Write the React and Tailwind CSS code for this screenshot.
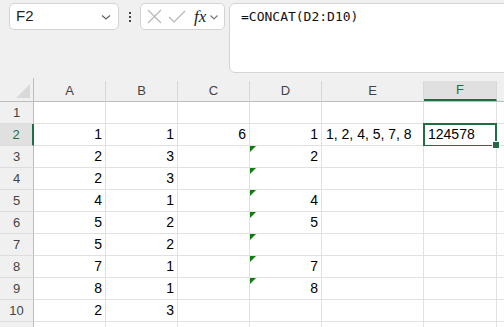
import React from "react";

const cols = [
  { key: "A", w: "w-[72px]" },
  { key: "B", w: "w-[72px]" },
  { key: "C", w: "w-[72px]" },
  { key: "D", w: "w-[72px]" },
  { key: "E", w: "w-[102px]" },
  { key: "F", w: "w-[73px]" },
];

const rows = [
  { n: 1, A: "", B: "", C: "", D: "" },
  { n: 2, A: "1", B: "1", C: "6", D: "1", E: "1, 2, 4, 5, 7, 8", F: "124578" },
  { n: 3, A: "2", B: "3", D: "2", flag: true },
  { n: 4, A: "2", B: "3", D: "", flag: true },
  { n: 5, A: "4", B: "1", D: "4", flag: true },
  { n: 6, A: "5", B: "2", D: "5", flag: true },
  { n: 7, A: "5", B: "2", D: "", flag: true },
  { n: 8, A: "7", B: "1", D: "7", flag: true },
  { n: 9, A: "8", B: "1", D: "8", flag: true },
  { n: 10, A: "2", B: "3", D: "" },
  { n: 11, hideNum: true },
];

const Toolbar = () => (
  <div className="h-[78px] bg-[#f0f0f0] flex items-start pt-[3px] pl-[9px]">
    {/* Name box */}
    <div className="w-[110px] h-[27px] shrink-0 bg-white border border-[#d4d4d4] rounded-[5px] flex items-center justify-between pl-[6px] pr-[6px]">
      <span className="text-[15px] text-[#222]">F2</span>
      <svg width="12" height="12" viewBox="0 0 12 12" className="mt-[1px]">
        <path d="M2 4.5 L6 8 L10 4.5" fill="none" stroke="#666" strokeWidth="1.3" />
      </svg>
    </div>
    {/* dots */}
    <div className="w-[21px] h-[27px] shrink-0 flex flex-col items-center justify-center gap-[2px]">
      <span className="w-[2px] h-[2px] bg-[#444]" />
      <span className="w-[2px] h-[2px] bg-[#444]" />
      <span className="w-[2px] h-[2px] bg-[#444]" />
    </div>
    {/* cancel / enter / fx */}
    <div className="w-[85px] h-[27px] shrink-0 bg-white border border-[#d4d4d4] rounded-[5px] flex items-center pl-[6px]">
      <svg width="15" height="15" viewBox="0 0 15 15">
        <path d="M1 1 L14 14 M14 1 L1 14" stroke="#b4b4b4" strokeWidth="1.1" />
      </svg>
      <svg width="18" height="15" viewBox="0 0 18 15" className="ml-[6px]">
        <path d="M1 8 L6 13 L17 2" fill="none" stroke="#b4b4b4" strokeWidth="1.1" />
      </svg>
      <span className="ml-[8px] text-[17px] italic text-[#222] leading-none" style={{ fontFamily: '"Liberation Serif", serif' }}>
        fx
      </span>
      <svg width="10" height="10" viewBox="0 0 10 10" className="ml-[3px] mt-[1px]">
        <path d="M1.5 3.5 L5 7 L8.5 3.5" fill="none" stroke="#777" strokeWidth="1.1" />
      </svg>
    </div>
    {/* formula box */}
    <div className="ml-[4px] w-[290px] h-[70px] shrink-0 bg-white border border-[#d4d4d4] rounded-[6px] pl-[11px] pt-[5px]">
      <div className="text-[13px] leading-[16px] text-[#111]" style={{ fontFamily: '"DejaVu Sans Mono", "Liberation Mono", monospace' }}>
        =CONCAT(D2:D10)
      </div>
    </div>
  </div>
);

const HeaderRow = () => (
  <div className="flex h-[24px] bg-[#f0f0f0] border-b border-[#bdbdbd]">
    <div className="w-[34px] shrink-0 border-r border-[#bdbdbd] relative">
      <div
        className="absolute right-[3px] bottom-[3px] w-[14px] h-[14px] bg-[#d9d9d9]"
        style={{ clipPath: "polygon(100% 0, 100% 100%, 0 100%)" }}
      />
    </div>
    {cols.map((c) => (
      <div
        key={c.key}
        className={`${c.w} shrink-0 mt-[3px] border-r border-[#d8d8d8] flex items-center justify-center text-[13px] ${
          c.key === "F"
            ? "bg-[#e0e0e0] border-b-2 border-b-[#1e6e42] text-[#1e6e42]"
            : "text-[#444]"
        }`}
      >
        {c.key}
      </div>
    ))}
    <div className="flex-1 mt-[3px]" />
  </div>
);

const Row = ({ r }) => {
  const sel = r.n === 2;
  return (
    <div className="flex h-[22px]">
      <div
        className={`w-[34px] shrink-0 flex items-center justify-center text-[13px] border-b border-[#dcdcdc] ${
          sel
            ? "bg-[#e0e0e0] text-[#1e6e42] border-r-2 border-r-[#1e6e42]"
            : "bg-[#f0f0f0] text-[#444] border-r border-r-[#bdbdbd]"
        }`}
      >
        {r.hideNum ? "" : r.n}
      </div>
      {cols.map((c) => {
        const val = r[c.key] || "";
        const left = c.key === "E" || c.key === "F";
        const isSel = sel && c.key === "F";
        return (
          <div
            key={c.key}
            className={`${c.w} shrink-0 relative bg-white border-r border-b border-[#e1e1e1] flex items-center text-[14px] text-black ${
              left ? "justify-start pl-[4px]" : "justify-end pr-[3px]"
            }`}
          >
            {c.key === "D" && r.flag && (
              <div
                className="absolute left-0 top-0 w-[6px] h-[6px] bg-[#107c10]"
                style={{ clipPath: "polygon(0 0, 100% 0, 0 100%)" }}
              />
            )}
            {isSel && (
              <>
                <div className="absolute -left-px -top-px w-[74px] h-[24px] border-2 border-[#1e6e42] pointer-events-none" />
                <div className="absolute right-[-4px] bottom-[-4px] w-[6px] h-[6px] bg-[#1e6e42] border border-white box-content z-10" />
              </>
            )}
            <span className="whitespace-nowrap">{val}</span>
          </div>
        );
      })}
      <div className="flex-1 bg-white border-b border-[#e1e1e1]" />
    </div>
  );
};

export default function App() {
  return (
    <div
      className="w-[504px] h-[327px] overflow-hidden bg-white"
      style={{ fontFamily: '"Liberation Sans", Arial, sans-serif' }}
    >
      <Toolbar />
      <HeaderRow />
      {rows.map((r) => (
        <Row key={r.n} r={r} />
      ))}
    </div>
  );
}
